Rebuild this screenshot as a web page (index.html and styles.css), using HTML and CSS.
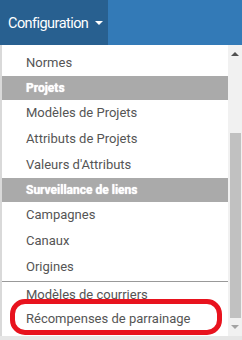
FILE: index.html
```html
<!DOCTYPE html>
<html lang="fr">
<head>
  <meta charset="UTF-8">
  <meta name="viewport" content="width=device-width, initial-scale=1.0">
  <title>Configuration</title>
  <link rel="stylesheet" href="styles.css">
</head>
<body>
  <nav class="navbar">
    <a class="nav-toggle" href="#">Configuration <span class="caret"></span></a>
  </nav>
  <div class="menu-wrap">
    <ul class="dropdown">
      <li class="item">Normes</li>
      <li class="header">Projets</li>
      <li class="item">Modèles de Projets</li>
      <li class="item">Attributs de Projets</li>
      <li class="item">Valeurs d'Attributs</li>
      <li class="header">Surveillance de liens</li>
      <li class="item">Campagnes</li>
      <li class="item">Canaux</li>
      <li class="item">Origines</li>
      <li class="divider"></li>
      <li class="item">Modèles de courriers</li>
      <li class="item last">Récompenses de parrainage</li>
    </ul>
    <div class="scrollbar">
      <span class="arrow up"></span>
      <div class="track"><div class="thumb"></div></div>
      <span class="arrow down"></span>
    </div>
    <div class="highlight"></div>
  </div>
  <div class="bottom"></div>
</body>
</html>
```

FILE: styles.css
```css
* {
  box-sizing: border-box;
}

body {
  margin: 0;
  width: 242px;
  height: 340px;
  overflow: hidden;
  font-family: Roboto, "Liberation Sans", sans-serif;
  background: #fff;
}

.navbar {
  height: 45px;
  background: #337ab7;
  display: flex;
}

.nav-toggle {
  width: 108px;
  background: #286090;
  color: #fff;
  text-decoration: none;
  font-size: 14.5px;
  letter-spacing: -0.55px;
  display: flex;
  align-items: center;
  padding: 1px 8px 0;
  gap: 7px;
}

.caret {
  width: 0;
  height: 0;
  border-top: 4px solid #fff;
  border-left: 4px solid transparent;
  border-right: 4px solid transparent;
}

.menu-wrap {
  position: relative;
  display: flex;
  height: 291px;
  border-left: 2px solid #d9d9d9;
}

.dropdown {
  flex: 1;
  margin: 0;
  padding: 5px 0 0;
  list-style: none;
  overflow: hidden;
}

.item {
  height: 26px;
  line-height: 26px;
  padding-left: 24px;
  font-size: 13px;
  color: #555;
  white-space: nowrap;
}

.item.last {
  line-height: 22px;
}

.header {
  height: 24px;
  line-height: 24px;
  padding-left: 24px;
  background: #aaa;
  color: #fff;
  font-size: 12px;
  font-weight: bold;
  text-shadow: 0 0 1px #fff;
}

.divider {
  height: 1px;
  margin: 1px 0 0;
  background: #999;
}

.scrollbar {
  width: 14px;
  background: #f1f1f1;
  display: flex;
  flex-direction: column;
  align-items: center;
}

.arrow {
  width: 0;
  height: 0;
  border-left: 4px solid transparent;
  border-right: 4px solid transparent;
  margin: 7px 0;
}

.arrow.up {
  border-bottom: 4px solid #505050;
}

.arrow.down {
  border-top: 4px solid #a3a3a3;
}

.track {
  flex: 1;
  width: 100%;
  padding-top: 70px;
  display: flex;
  flex-direction: column;
}

.thumb {
  flex: 1;
  margin: 0 1px 0 2px;
  background: #c1c1c1;
}

.highlight {
  position: absolute;
  left: 8px;
  top: 254px;
  width: 212px;
  height: 36px;
  border: 5px solid #e8131e;
  border-radius: 15px;
}

.bottom {
  height: 4px;
  background: #e6e6e6;
}
```
